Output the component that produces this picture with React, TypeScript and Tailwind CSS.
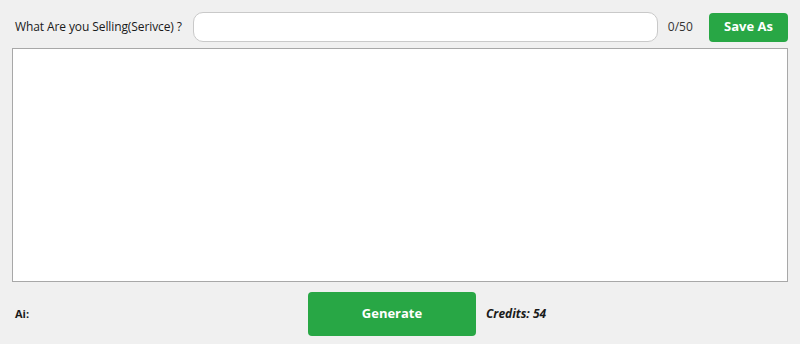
export default function App() {
  return (
    <div className="w-[800px] h-[344px] bg-[#f0f0f0] font-['Open_Sans',sans-serif] text-[#1a1a1a] flex flex-col">
      {/* top row */}
      <div className="flex items-center h-[38px] mt-[8px] pl-[15px] pr-[12px]">
        <span className="text-[12px] tracking-[-0.1px]">What Are you Selling(Serivce) ?</span>
        <input
          className="ml-[11px] w-[465px] h-[30px] bg-white border border-[#c9c9c9] rounded-[10px] outline-none px-2 text-[12px]"
        />
        <span className="ml-[10px] text-[12px] text-[#333]">0/50</span>
        <button className="ml-auto w-[79px] h-[29px] bg-[#28a745] rounded-[4px] text-white text-[13px] font-bold">
          Save As
        </button>
      </div>

      {/* text area */}
      <div className="mx-[12px] mt-[2px] h-[234px] bg-white border border-[#a8a8a8]" />

      {/* bottom row */}
      <div className="flex items-center mt-[10px] pl-[15px]">
        <span className="w-[293px] text-[11px] font-bold">Ai:</span>
        <button className="w-[168px] h-[44px] bg-[#28a745] rounded-[4px] text-white text-[13px] font-bold">
          Generate
        </button>
        <span className="ml-[10px] text-[12px] font-bold italic">Credits: 54</span>
      </div>
    </div>
  )
}
